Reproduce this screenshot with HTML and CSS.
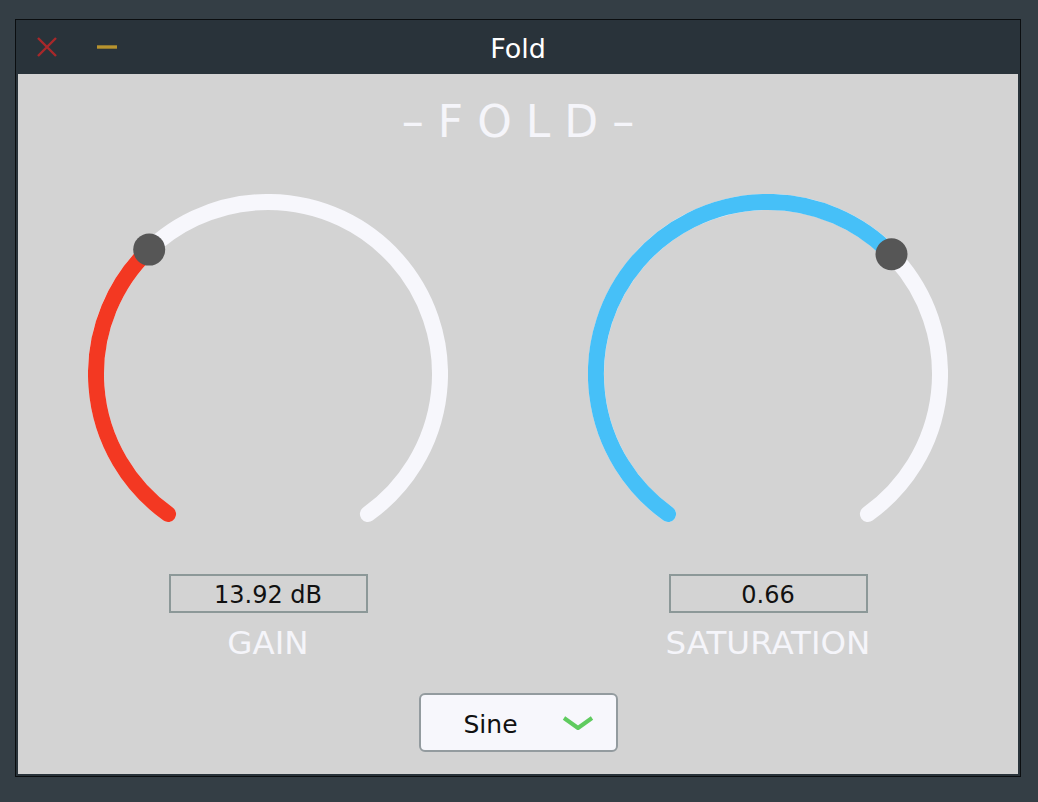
FILE: index.html
```html
<!DOCTYPE html>
<html>
<head>
<meta charset="utf-8">
<link rel="stylesheet" href="styles.css">
</head>
<body>
<div class="window">
  <div class="titlebar">
    <div class="buttons">
      <svg class="btn" width="20" height="20" viewBox="0 0 20 20"><path d="M1 1 L19 19 M19 1 L1 19" stroke="#a8282a" stroke-width="2.4" fill="none"/></svg>
      <svg class="btn" width="20" height="20" viewBox="0 0 20 20"><path d="M0 10 H20" stroke="#b8942e" stroke-width="3.4" fill="none"/></svg>
    </div>
    <div class="title">Fold</div>
    <div></div>
  </div>
  <div class="content">
    <h1 class="heading">–FOLD–</h1>
    <div class="knobs">
      <div class="knob-col">
        <svg class="knob" width="360" height="360" viewBox="0 0 360 360">
          <path d="M80.1 320 A172 172 0 1 1 279.9 320" stroke="#f7f7fc" stroke-width="16" stroke-linecap="round" fill="none"/>
          <path d="M80.1 320 A172 172 0 0 1 61.2 55.6" stroke="#f33822" stroke-width="16" stroke-linecap="round" fill="none"/>
          <circle cx="61.2" cy="55.6" r="16" fill="#565656"/>
        </svg>
        <div class="value">13.92 dB</div>
        <div class="label">GAIN</div>
      </div>
      <div class="knob-col">
        <svg class="knob" width="360" height="360" viewBox="0 0 360 360">
          <path d="M80.1 320 A172 172 0 1 1 279.9 320" stroke="#f7f7fc" stroke-width="16" stroke-linecap="round" fill="none"/>
          <path d="M80.1 320 A172 172 0 1 1 303.5 60.3" stroke="#46c0f8" stroke-width="16" stroke-linecap="round" fill="none"/>
          <circle cx="303.5" cy="60.3" r="16" fill="#565656"/>
        </svg>
        <div class="value">0.66</div>
        <div class="label">SATURATION</div>
      </div>
    </div>
    <div class="dropdown">
      <span class="dd-text">Sine</span>
      <svg class="chev" width="32" height="18" viewBox="0 0 32 18"><path d="M2 3 L16 13 L30 3" stroke="#5fcb5f" stroke-width="4" fill="none" stroke-linejoin="round"/></svg>
    </div>
  </div>
</div>
</body>
</html>
```

FILE: styles.css
```css
html, body {
  margin: 0;
  padding: 0;
}
body {
  background: #343e45;
  width: 1038px;
  height: 802px;
  padding: 19px 0 0 15px;
  box-sizing: border-box;
  font-family: "DejaVu Sans", "Open Sans", sans-serif;
}
.window {
  width: 1006px;
  border: 1px solid #0b0e10;
  background: #29333a;
  padding: 0 2px 2px 2px;
  box-sizing: border-box;
}
.titlebar {
  height: 54px;
  display: grid;
  grid-template-columns: 1fr auto 1fr;
  align-items: center;
}
.buttons {
  display: flex;
  gap: 40px;
  padding-left: 19px;
}
.btn {
  display: block;
}
.title {
  color: #ffffff;
  font-size: 27px;
  padding-top: 3px;
}
.content {
  background: #d3d3d3;
  height: 700px;
  display: flex;
  flex-direction: column;
  align-items: center;
}
.heading {
  margin: 23px 0 0 0;
  font-weight: normal;
  font-size: 44px;
  line-height: 50px;
  letter-spacing: 14px;
  padding-left: 14px;
  color: #f5f5fa;
}
.knobs {
  display: flex;
  width: 100%;
  margin-top: 47px;
}
.knob-col {
  flex: 1;
  display: flex;
  flex-direction: column;
  align-items: center;
}
.knob {
  display: block;
}
.value {
  margin-top: 20px;
  width: 199px;
  height: 39px;
  box-sizing: border-box;
  border: 2px solid #8c9898;
  text-align: center;
  font-size: 24px;
  line-height: 35px;
  padding-top: 2px;
  color: #111;
}
.label {
  margin-top: 12px;
  font-size: 32.5px;
  line-height: 36px;
  color: #f5f5fa;
}
.dropdown {
  margin-top: 32px;
  width: 199px;
  height: 59px;
  box-sizing: border-box;
  border: 2px solid #939b9f;
  border-radius: 6px;
  background: #f7f7fc;
  display: flex;
  align-items: center;
  padding-left: 43px;
  padding-top: 3px;
}
.dd-text {
  font-size: 25px;
  color: #111;
  width: 98px;
}
.chev {
  display: block;
  margin-top: -1px;
}
```
